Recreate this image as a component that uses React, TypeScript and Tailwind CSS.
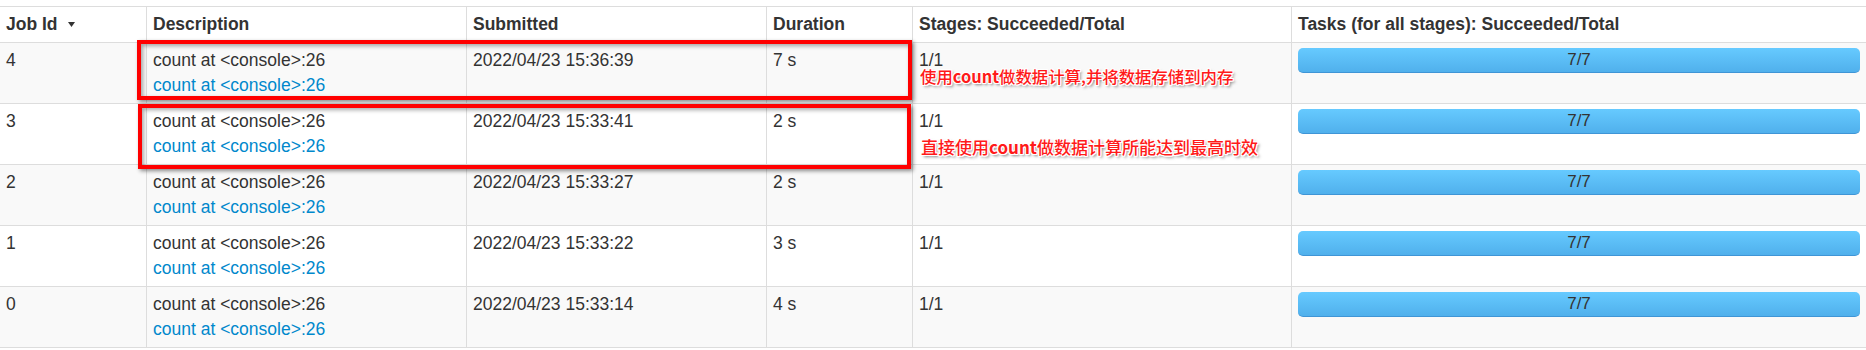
import React from "react";

const rows = [
  { id: "4", time: "2022/04/23 15:36:39", dur: "7 s" },
  { id: "3", time: "2022/04/23 15:33:41", dur: "2 s" },
  { id: "2", time: "2022/04/23 15:33:27", dur: "2 s" },
  { id: "1", time: "2022/04/23 15:33:22", dur: "3 s" },
  { id: "0", time: "2022/04/23 15:33:14", dur: "4 s" },
];

const cols = "grid grid-cols-[146px_320px_300px_146px_379px_1fr]";
const cell = "px-[6px] py-[5px] leading-[25px]";
const bl = "border-l border-[#dddddd]";

function SortArrow() {
  return (
    <svg width="7" height="5" viewBox="0 0 7 5" className="inline-block ml-[10px] align-[3px]">
      <polygon points="0,0 7,0 3.5,5" fill="#333333" />
    </svg>
  );
}

function Annotation({ before, after, className }: { before: string; after: string; className: string }) {
  return (
    <div
      className={
        "absolute whitespace-nowrap text-[#ff1a1a] font-medium font-['Noto_Sans_CJK_SC','Noto_Sans',sans-serif] leading-none [text-shadow:1px_1px_0_#fff,-1px_-1px_0_#fff,1px_-1px_0_#fff,-1px_1px_0_#fff,0_1px_0_#fff,0_-1px_0_#fff,1px_0_0_#fff,-1px_0_0_#fff,2px_2px_3px_rgba(0,0,0,0.55)] " +
        className
      }
    >
      {before}
      <span className="font-bold">count</span>
      {after}
    </div>
  );
}

export default function App() {
  return (
    <div className="w-[1866px] h-[350px] bg-white pt-[6px] text-[#333333] text-[17.5px] font-['Liberation_Sans',Arial,sans-serif] overflow-hidden">
      <div className="relative border-t border-b border-[#dddddd]">
        <div className={cols + " bg-white font-bold h-[35px]"}>
          <div className={cell + " whitespace-nowrap"}>
            Job Id
            <SortArrow />
          </div>
          <div className={cell + " " + bl}>Description</div>
          <div className={cell + " " + bl}>Submitted</div>
          <div className={cell + " " + bl}>Duration</div>
          <div className={cell + " " + bl + " whitespace-nowrap"}>Stages: Succeeded/Total</div>
          <div className={cell + " " + bl + " whitespace-nowrap"}>Tasks (for all stages): Succeeded/Total</div>
        </div>
        {rows.map((r, i) => (
          <div
            key={r.id}
            className={cols + " border-t border-[#dddddd] h-[61px] " + (i % 2 === 0 ? "bg-[#f9f9f9]" : "bg-white")}
          >
            <div className={cell}>{r.id}</div>
            <div className={cell + " " + bl + " whitespace-nowrap"}>
              <div>count at &lt;console&gt;:26</div>
              <div className="text-[#0088cc]">count at &lt;console&gt;:26</div>
            </div>
            <div className={cell + " " + bl}>{r.time}</div>
            <div className={cell + " " + bl}>{r.dur}</div>
            <div className={cell + " " + bl}>1/1</div>
            <div className={cell + " " + bl}>
              <div className="h-[25px] rounded-[5px] bg-gradient-to-b from-[#66caff] to-[#50b0ec] border-b border-[#3f95d6] text-center leading-[24px] text-[#333333] text-[17px]">
                7/7
              </div>
            </div>
          </div>
        ))}

        <div className="absolute left-[137px] top-[33px] w-[775px] h-[60px] border-[4px] border-[#ff0000] shadow-[2px_2px_4px_rgba(0,0,0,0.45),inset_2px_2px_4px_rgba(0,0,0,0.35)]" />
        <div className="absolute left-[138px] top-[97px] w-[773px] h-[65px] border-[4px] border-[#ff0000] shadow-[2px_2px_4px_rgba(0,0,0,0.45),inset_2px_2px_4px_rgba(0,0,0,0.35)]" />

        <Annotation before="使用" after="做数据计算,并将数据存储到内存" className="left-[920px] top-[61px] text-[16.4px]" />
        <Annotation before="直接使用" after="做数据计算所能达到最高时效" className="left-[921px] top-[131px] text-[17px]" />
      </div>
    </div>
  );
}
